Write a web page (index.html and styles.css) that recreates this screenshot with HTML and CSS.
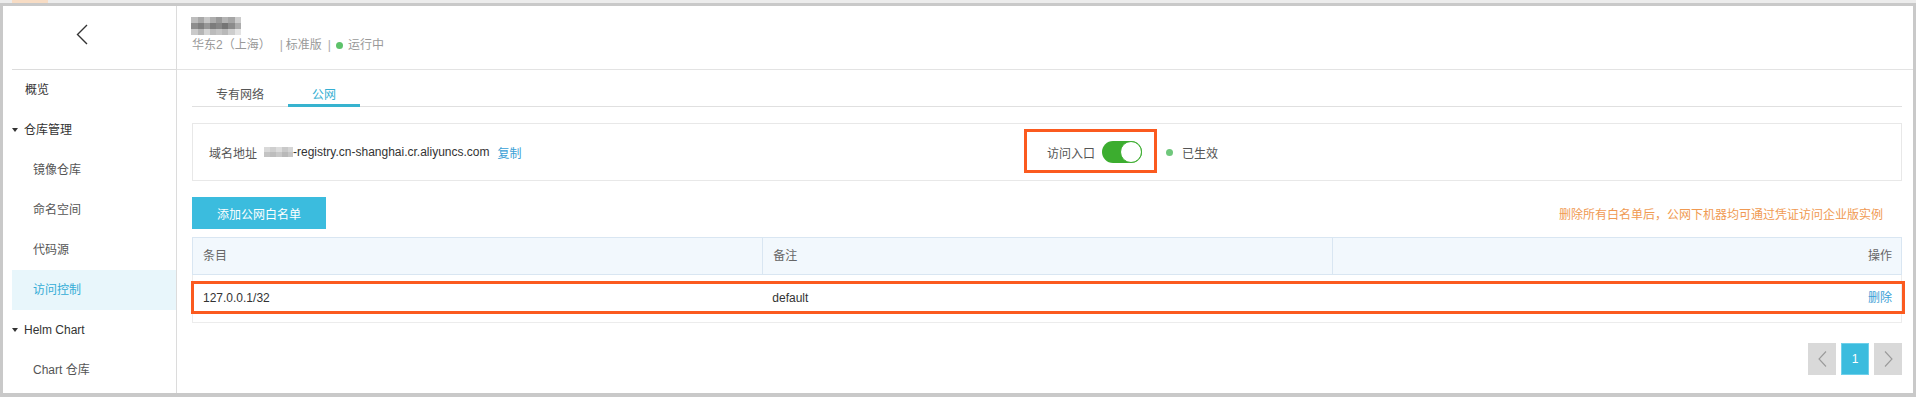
FILE: index.html
```html
<!DOCTYPE html>
<html lang="zh-CN">
<head>
<meta charset="utf-8">
<title>访问控制</title>
<link rel="stylesheet" href="styles.css">
</head>
<body>
<div class="topstrip"><span class="hint"></span></div>
<div class="frame">
  <aside class="sidebar">
    <div class="back">
      <svg class="back-icon" width="12" height="21" viewBox="0 0 12 21"><polyline points="11,1 1.5,10.5 11,20" fill="none" stroke="#333" stroke-width="1.4"/></svg>
    </div>
    <nav class="menu">
      <div class="item">概览</div>
      <div class="group"><span class="caret"></span>仓库管理</div>
      <div class="sub">镜像仓库</div>
      <div class="sub">命名空间</div>
      <div class="sub">代码源</div>
      <div class="sub active">访问控制</div>
      <div class="group"><span class="caret"></span>Helm Chart</div>
      <div class="sub">Chart 仓库</div>
    </nav>
  </aside>
  <main class="main">
    <header class="head">
      <svg class="mosaic" width="50" height="18" viewBox="0 0 50 18">
        <rect x="0" y="0" width="7" height="6" fill="#bdbdbd"/>
        <rect x="7" y="0" width="6" height="6" fill="#a8a8a8"/>
        <rect x="13" y="0" width="6" height="6" fill="#c6c6c6"/>
        <rect x="19" y="0" width="6" height="6" fill="#adadad"/>
        <rect x="25" y="0" width="6" height="6" fill="#999999"/>
        <rect x="31" y="0" width="6" height="6" fill="#b3b3b3"/>
        <rect x="37" y="0" width="7" height="6" fill="#a5a5a5"/>
        <rect x="44" y="0" width="6" height="6" fill="#cccccc"/>
        <rect x="0" y="6" width="7" height="6" fill="#8e8e8e"/>
        <rect x="7" y="6" width="6" height="6" fill="#7f7f7f"/>
        <rect x="13" y="6" width="6" height="6" fill="#979797"/>
        <rect x="19" y="6" width="6" height="6" fill="#7c7c7c"/>
        <rect x="25" y="6" width="6" height="6" fill="#868686"/>
        <rect x="31" y="6" width="6" height="6" fill="#757575"/>
        <rect x="37" y="6" width="7" height="6" fill="#8b8b8b"/>
        <rect x="44" y="6" width="6" height="6" fill="#acacac"/>
        <rect x="0" y="12" width="7" height="6" fill="#cacaca"/>
        <rect x="7" y="12" width="6" height="6" fill="#b5b5b5"/>
        <rect x="13" y="12" width="6" height="6" fill="#d3d3d3"/>
        <rect x="19" y="12" width="6" height="6" fill="#bbbbbb"/>
        <rect x="25" y="12" width="6" height="6" fill="#c4c4c4"/>
        <rect x="31" y="12" width="6" height="6" fill="#b8b8b8"/>
        <rect x="37" y="12" width="7" height="6" fill="#cdcdcd"/>
        <rect x="44" y="12" width="6" height="6" fill="#e3e3e3"/>
      </svg>
      <div class="meta">
        <span>华东2（上海）</span><span class="sep">|</span><span>标准版</span><span class="sep sep2">|</span><span class="run-dot"></span><span>运行中</span>
      </div>
    </header>
    <section class="content">
      <div class="tabs">
        <div class="tab">专有网络</div>
        <div class="tab active">公网</div>
      </div>
      <div class="info">
        <div class="info-col">
          <span class="label">域名地址</span>
          <svg class="blur" width="29" height="10" viewBox="0 0 29 10">
            <rect x="0" y="0" width="6" height="5" fill="#d9d9d9"/>
            <rect x="6" y="0" width="6" height="5" fill="#cfcfcf"/>
            <rect x="12" y="0" width="6" height="5" fill="#dcdcdc"/>
            <rect x="18" y="0" width="6" height="5" fill="#c9c9c9"/>
            <rect x="24" y="0" width="5" height="5" fill="#d5d5d5"/>
            <rect x="0" y="5" width="6" height="5" fill="#c4c4c4"/>
            <rect x="6" y="5" width="6" height="5" fill="#bdbdbd"/>
            <rect x="12" y="5" width="6" height="5" fill="#c8c8c8"/>
            <rect x="18" y="5" width="6" height="5" fill="#b9b9b9"/>
            <rect x="24" y="5" width="5" height="5" fill="#c6c6c6"/>
          </svg><span class="domain">-registry.cn-shanghai.cr.aliyuncs.com</span>
          <a class="link copy">复制</a>
        </div>
        <div class="info-col">
          <span class="switch-wrap">
            <span class="label">访问入口</span>
            <span class="switch"><span class="knob"></span></span>
          </span>
          <span class="ok-dot"></span>
          <span class="ok-text">已生效</span>
        </div>
      </div>
      <div class="toolbar">
        <button class="btn">添加公网白名单</button>
        <span class="warn">删除所有白名单后，公网下机器均可通过凭证访问企业版实例</span>
      </div>
      <div class="table">
        <div class="thead">
          <div class="th">条目</div>
          <div class="th">备注</div>
          <div class="th right">操作</div>
        </div>
        <div class="tr marked">
          <div class="td">127.0.0.1/32</div>
          <div class="td">default</div>
          <div class="td right"><a class="link">删除</a></div>
        </div>
      </div>
      <div class="pager">
        <span class="pg pg-nav"><svg width="9" height="16" viewBox="0 0 9 16"><polyline points="8,0.5 1,8 8,15.5" fill="none" stroke="#9a9a9a" stroke-width="1.1"/></svg></span>
        <span class="pg pg-cur">1</span>
        <span class="pg pg-nav"><svg width="9" height="16" viewBox="0 0 9 16"><polyline points="1,0.5 8,8 1,15.5" fill="none" stroke="#9a9a9a" stroke-width="1.1"/></svg></span>
      </div>
    </section>
  </main>
</div>
</body>
</html>
```

FILE: styles.css
```css
* { box-sizing: border-box; }

html, body {
  margin: 0;
  padding: 0;
  background: #ffffff;
}

body {
  font-family: "Liberation Sans", "Noto Sans CJK SC", sans-serif;
  font-size: 12px;
  color: #333;
  width: 1916px;
  height: 397px;
  overflow: hidden;
}

.topstrip {
  height: 3px;
  background: #ececec;
  position: relative;
}

.hint {
  display: block;
  margin-left: 12px;
  width: 36px;
  height: 3px;
  background: #f7dcc4;
}

.frame {
  display: flex;
  width: 1916px;
  height: 394px;
  border: 3px solid #c9c9c9;
  border-bottom-width: 4px;
  overflow: hidden;
}

/* Sidebar */
.sidebar {
  width: 174px;
  flex: none;
  border-right: 1px solid #dcdcdc;
  padding-left: 9px;
}

.back {
  height: 64px;
  border-bottom: 1px solid #dcdcdc;
  padding: 18px 0 0 64px;
}

.back-icon { display: block; }

.menu { display: flex; flex-direction: column; }

.item, .group, .sub {
  height: 40px;
  line-height: 40px;
  white-space: nowrap;
  color: #333;
}

.item { padding-left: 13px; }

.group {
  display: flex;
  align-items: center;
}

.caret {
  width: 0;
  height: 0;
  border-left: 3px solid transparent;
  border-right: 3px solid transparent;
  border-top: 4px solid #333;
  margin-right: 6px;
}

.sub {
  padding-left: 21px;
  color: #555;
}

.sub.active {
  background: #e8f6fb;
  color: #33acd6;
}

/* Main */
.main {
  flex: 1;
  min-width: 0;
  display: flex;
  flex-direction: column;
}

.head {
  height: 64px;
  border-bottom: 1px solid #e3e3e3;
  padding: 11px 0 0 14px;
  flex: none;
}

.mosaic {
  display: block;
  filter: blur(0.6px);
}

.meta {
  margin-top: 2px;
  line-height: 16px;
  color: #999;
  display: flex;
  align-items: center;
  padding-left: 1px;
}

.sep { margin: 0 3px 0 9px; color: #aaa; }
.sep2 { margin: 0 5px 0 6px; }

.run-dot {
  width: 7px;
  height: 7px;
  border-radius: 50%;
  background: #5dc26a;
  margin-right: 5px;
}

.content {
  padding: 13px 11px 0 15px;
}

.tabs {
  display: flex;
  height: 24px;
  border-bottom: 1px solid #e0e0e0;
}

.tab {
  height: 24px;
  line-height: 24px;
  padding: 0 24px;
  color: #555;
  margin-bottom: -1px;
}

.tab.active {
  color: #35afd2;
  box-shadow: inset 0 -3px 0 #37b3cf;
}

.info {
  margin-top: 16px;
  height: 58px;
  border: 1px solid #e8e8e8;
  padding: 0 16px;
  display: grid;
  grid-template-columns: 1fr 1fr;
  align-items: center;
}

.info-col {
  display: flex;
  align-items: center;
  white-space: nowrap;
}

.label { color: #555; }

.blur {
  margin-left: 7px;
  filter: blur(0.7px);
}

.domain { color: #333; }

.link {
  color: #3aa0d6;
  cursor: pointer;
}

.copy { margin-left: 8px; }

.switch-wrap {
  position: relative;
  display: flex;
  align-items: center;
}

.switch-wrap::after {
  content: "";
  position: absolute;
  left: -23px;
  right: -15px;
  top: -12px;
  bottom: -10px;
  border: 3px solid #fb5a1f;
}

.switch {
  margin-left: 7px;
  width: 40px;
  height: 22px;
  border-radius: 11px;
  background: #3cad2f;
  position: relative;
}

.knob {
  position: absolute;
  right: 0;
  top: 0;
  width: 22px;
  height: 22px;
  border-radius: 50%;
  background: #fff;
  border: 1.5px solid #3cad2f;
}

.ok-dot {
  margin-left: 24px;
  width: 7px;
  height: 7px;
  border-radius: 50%;
  background: #6fc77b;
}

.ok-text {
  margin-left: 9px;
  color: #555;
}

.toolbar {
  margin-top: 16px;
  display: flex;
  align-items: center;
  justify-content: space-between;
  height: 32px;
}

.btn {
  height: 32px;
  width: 134px;
  border: none;
  background: #3bbcde;
  color: #fff;
  font-family: inherit;
  font-size: 12px;
  padding: 0;
}

.warn {
  color: #f09a52;
  margin-right: 19px;
}

.table { margin-top: 8px; }

.thead, .tr {
  display: grid;
  grid-template-columns: 1fr 1fr 1fr;
}

.thead {
  height: 38px;
  background: #f2f8fd;
  border: 1px solid #d9e6f2;
}

.th {
  line-height: 36px;
  padding: 0 9px 0 10px;
  color: #666;
}

.th + .th { border-left: 1px solid #d9e6f2; }

.tr {
  height: 48px;
  border: 1px solid #ececec;
  border-top: none;
  position: relative;
}

.td {
  line-height: 47px;
  padding: 0 9px 0 10px;
  color: #333;
}

.right { text-align: right; }

.tr.marked::after {
  content: "";
  position: absolute;
  left: -2px;
  right: -4px;
  top: 6px;
  bottom: 8px;
  border: 3px solid #fb5a1f;
}

.pager {
  margin-top: 20px;
  display: flex;
  justify-content: flex-end;
  gap: 5px;
  padding-right: 0;
}

.pg {
  width: 28px;
  height: 32px;
  display: flex;
  align-items: center;
  justify-content: center;
}

.pg-nav { background: #d9d9d9; }

.pg-cur {
  background: #3bbcde;
  color: #fff;
  border: 1px solid #6fd0ea;
}
```
